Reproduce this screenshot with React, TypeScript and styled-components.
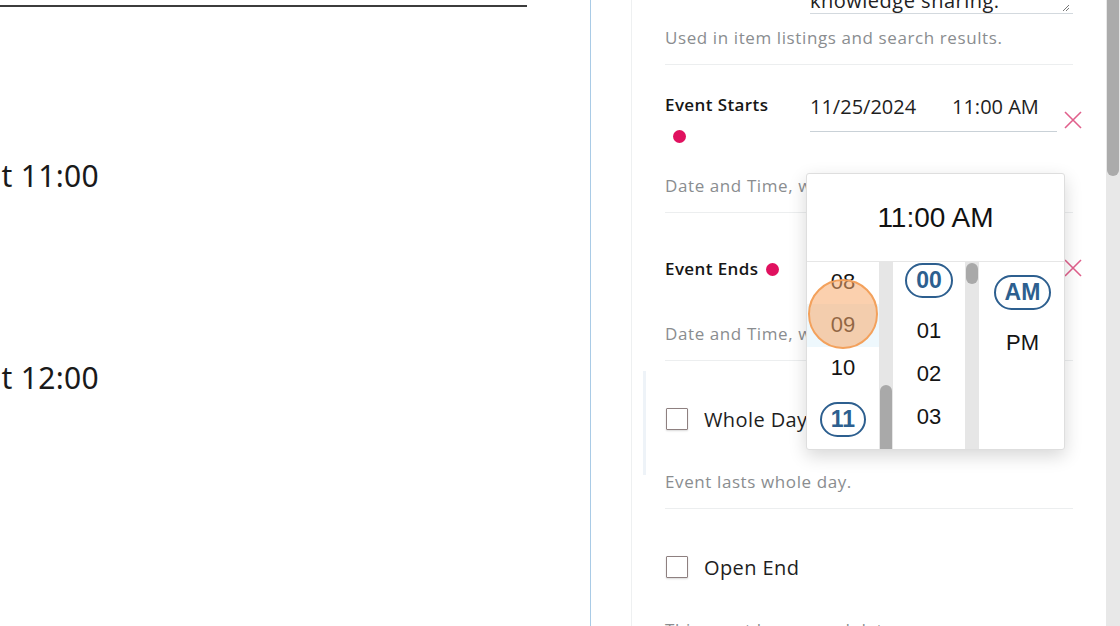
import { createGlobalStyle } from "styled-components";
import styled, { css } from "styled-components";

const GlobalStyle = createGlobalStyle`
  html, body {
    margin: 0;
    padding: 0;
    background: #fff;
  }
  body {
    font-family: "Open Sans", "Noto Sans", sans-serif;
    overflow: hidden;
  }
`;

const Page = styled.div`
  display: flex;
  width: 1120px;
  height: 626px;
  overflow: hidden;
  background: #fff;
`;

/* left editor pane */

const Editor = styled.div`
  width: 590px;
  flex-shrink: 0;
  border-right: 1px solid #a9cbe6;
  display: flex;
  flex-direction: column;
  overflow: hidden;
`;

const EditorRule = styled.div`
  width: 527px;
  height: 5px;
  border-bottom: 2px solid #3c3c3c;
`;

const EditorLine = styled.div<{ $gap: number }>`
  margin-top: ${(p) => p.$gap}px;
  width: 99px;
  display: flex;
  justify-content: flex-end;
  overflow: hidden;
  white-space: nowrap;
  font-family: "Noto Sans", "Open Sans", sans-serif;
  font-size: 30px;
  letter-spacing: 0.3px;
  line-height: 40px;
  color: #1a1a1a;
`;

/* right settings pane */

const Sidebar = styled.div`
  flex: 1;
  display: flex;
  padding-left: 40px;
  min-width: 0;
`;

const Panel = styled.div`
  flex: 1;
  border-left: 1px solid #eef0f1;
  padding: 0 33px;
  min-width: 0;
`;

const PageScroll = styled.div`
  width: 14px;
  flex-shrink: 0;
  background: #e8e8e8;
`;

const PageThumb = styled.div`
  height: 176px;
  margin: 0 1px;
  background: #ababab;
  border-radius: 0 0 7px 7px;
`;

const TextareaStub = styled.div`
  margin-left: 145px;
  height: 14px;
  box-sizing: border-box;
  border-bottom: 1px solid #d3d9de;
  display: flex;
  justify-content: space-between;
  overflow: hidden;
`;

const TextareaText = styled.div`
  margin-top: -11px;
  font-size: 20px;
  letter-spacing: 0.5px;
  line-height: 24px;
  color: #222;
`;

const ResizeHandle = styled.svg`
  width: 8px;
  height: 8px;
  margin: 4px 3px 0 0;
`;

const Section = styled.div<{ $top: number }>`
  position: relative;
  padding-top: ${(p) => p.$top}px;
  padding-bottom: 14px;
  border-bottom: 1px solid #eceeef;
`;

const MarkedSection = styled(Section)`
  &::before {
    content: "";
    position: absolute;
    left: -22px;
    top: 10px;
    width: 3px;
    height: 104px;
    background: #eef3f8;
  }
`;

const Helper = styled.div<{ $gap: number }>`
  margin-top: ${(p) => p.$gap}px;
  font-size: 17px;
  letter-spacing: 0.6px;
  line-height: 24px;
  color: #8a8d90;
  white-space: nowrap;
`;

const FieldRow = styled.div`
  display: flex;
  align-items: center;
  height: 62px;
`;

const FieldLabel = styled.div`
  width: 145px;
  flex-shrink: 0;
`;

const LabelText = styled.div`
  width: 122px;
  font-size: 17px;
  font-weight: 600;
  letter-spacing: 0.4px;
  line-height: 31px;
  color: #161616;
`;

const RequiredDot = styled.span`
  display: inline-block;
  width: 13px;
  height: 13px;
  margin-left: 8px;
  border-radius: 50%;
  background: #e0115f;
  vertical-align: -1px;
`;

const DateInput = styled.div`
  align-self: flex-start;
  flex-shrink: 0;
  width: 247px;
  height: 43px;
  box-sizing: border-box;
  border-bottom: 1px solid #c9d1d7;
  display: flex;
  font-size: 20px;
  line-height: 36px;
  color: #1e1e1e;
  white-space: nowrap;
`;

const DatePart = styled.span`
  width: 142px;
`;

const ClearButton = styled.button`
  all: unset;
  flex-shrink: 0;
  margin-left: 7px;
  width: 18px;
  height: 18px;
  display: flex;
  cursor: pointer;
`;

const CheckRow = styled.label`
  display: flex;
  align-items: center;
  height: 40px;
  font-size: 20px;
  letter-spacing: 0.4px;
  color: #1e1e1e;
`;

const CheckBox = styled.span`
  width: 22px;
  height: 22px;
  box-sizing: border-box;
  margin: 0 16px 0 1px;
  border: 1.5px solid #8e8080;
  border-radius: 1px;
  box-shadow: 0 1px 2px rgba(0, 0, 0, 0.15);
  background: #fff;
`;

/* time picker popup */

const Picker = styled.div`
  position: absolute;
  z-index: 10;
  top: 108px;
  left: 141px;
  width: 259px;
  height: 277px;
  box-sizing: border-box;
  background: #fff;
  border: 1px solid #dedede;
  border-radius: 3px;
  box-shadow: 0 6px 18px rgba(0, 0, 0, 0.16);
  display: flex;
  flex-direction: column;
  overflow: hidden;
  font-family: "Liberation Sans", Arial, sans-serif;
`;

const PickerHeader = styled.div`
  height: 87px;
  flex-shrink: 0;
  border-bottom: 1px solid #e6e6e6;
  display: flex;
  align-items: center;
  justify-content: center;
  font-size: 28px;
  color: #111;
`;

const PickerBody = styled.div`
  flex: 1;
  display: flex;
  min-height: 0;
`;

const Column = styled.div<{ $width: number; $offset: number }>`
  position: relative;
  width: ${(p) => p.$width}px;
  flex-shrink: 0;
  overflow: hidden;
  & > div:first-child {
    margin-top: ${(p) => -p.$offset}px;
  }
`;

const ItemList = styled.div`
  display: flex;
  flex-direction: column;
`;

const TimeItem = styled.div<{ $selected?: boolean; $hover?: boolean }>`
  height: ${(p) => (p.$selected ? 59 : 43)}px;
  display: flex;
  align-items: center;
  justify-content: center;
  font-size: 22px;
  color: #141414;
  ${(p) =>
    p.$hover &&
    css`
      background: #eef8fd;
    `}
`;

const Pill = styled.span`
  height: 35px;
  box-sizing: border-box;
  padding: 0 9px;
  display: flex;
  align-items: center;
  border: 2.5px solid #2d5f8f;
  border-radius: 18px;
  font-size: 23px;
  font-weight: 700;
  color: #2d5f8f;
`;

const ColumnTrack = styled.div`
  width: 14px;
  flex-shrink: 0;
  background: #e6e6e6;
`;

const ColumnThumb = styled.div<{ $top: number; $size: number }>`
  margin: ${(p) => p.$top}px 1px 0;
  height: ${(p) => p.$size}px;
  border-radius: 6px;
  background: #a9a9a9;
`;

const TouchMark = styled.div`
  position: absolute;
  left: 1px;
  top: 17px;
  width: 70px;
  height: 70px;
  box-sizing: border-box;
  border-radius: 50%;
  border: 2px solid #f3a15c;
  background: rgba(248, 170, 108, 0.55);
`;

const ClearIcon = () => (
  <svg width="18" height="18" viewBox="0 0 18 18">
    <path d="M1 1 L17 17 M17 1 L1 17" stroke="#e0608c" strokeWidth="1.6" fill="none" />
  </svg>
);

type Entry = { label: string; selected?: boolean; hover?: boolean };

const hours: Entry[] = [
  { label: "08" },
  { label: "09", hover: true },
  { label: "10" },
  { label: "11", selected: true },
  { label: "12" },
];

const minutes: Entry[] = [
  { label: "00", selected: true },
  { label: "01" },
  { label: "02" },
  { label: "03" },
  { label: "04" },
];

const meridiem: Entry[] = [{ label: "AM", selected: true }, { label: "PM" }];

const renderItems = (entries: Entry[]) =>
  entries.map((e) => (
    <TimeItem key={e.label} $selected={e.selected} $hover={e.hover}>
      {e.selected ? <Pill>{e.label}</Pill> : e.label}
    </TimeItem>
  ));

const TimePicker = () => (
  <Picker>
    <PickerHeader>11:00 AM</PickerHeader>
    <PickerBody>
      <Column $width={72} $offset={1.5}>
        <ItemList>{renderItems(hours)}</ItemList>
        <TouchMark />
      </Column>
      <ColumnTrack>
        <ColumnThumb $top={123} $size={70} />
      </ColumnTrack>
      <Column $width={72} $offset={11.5}>
        <ItemList>{renderItems(minutes)}</ItemList>
      </Column>
      <ColumnTrack>
        <ColumnThumb $top={1} $size={21} />
      </ColumnTrack>
      <Column $width={87} $offset={-0.5}>
        <ItemList>{renderItems(meridiem)}</ItemList>
      </Column>
    </PickerBody>
  </Picker>
);

const App = () => {
  return (
    <>
      <GlobalStyle />
      <Page>
        <Editor>
          <EditorRule />
          <EditorLine $gap={149}>Event starts at 11:00</EditorLine>
          <EditorLine $gap={162}>Event ends at 12:00</EditorLine>
        </Editor>
        <Sidebar>
          <Panel>
            <TextareaStub>
              <TextareaText>knowledge sharing.</TextareaText>
              <ResizeHandle viewBox="0 0 8 8">
                <path d="M7 1 L1 7 M7 4 L4 7" stroke="#777" strokeWidth="1" fill="none" />
              </ResizeHandle>
            </TextareaStub>
            <Section $top={0}>
              <Helper $gap={12}>Used in item listings and search results.</Helper>
            </Section>

            <Section $top={24}>
              <FieldRow>
                <FieldLabel>
                  <LabelText>
                    Event Starts
                    <RequiredDot />
                  </LabelText>
                </FieldLabel>
                <DateInput>
                  <DatePart>11/25/2024</DatePart>
                  <span>11:00 AM</span>
                </DateInput>
                <ClearButton type="button">
                  <ClearIcon />
                </ClearButton>
              </FieldRow>
              <Helper $gap={23}>Date and Time, when the event starts.</Helper>
              <TimePicker />
            </Section>

            <Section $top={24}>
              <FieldRow>
                <FieldLabel>
                  <LabelText>
                    Event Ends
                    <RequiredDot />
                  </LabelText>
                </FieldLabel>
                <DateInput>
                  <DatePart>11/25/2024</DatePart>
                  <span>12:00 PM</span>
                </DateInput>
                <ClearButton type="button">
                  <ClearIcon />
                </ClearButton>
              </FieldRow>
              <Helper $gap={23}>Date and Time, when the event ends.</Helper>
            </Section>

            <MarkedSection $top={38}>
              <CheckRow>
                <CheckBox />
                Whole Day
              </CheckRow>
              <Helper $gap={31}>Event lasts whole day.</Helper>
            </MarkedSection>

            <Section $top={38}>
              <CheckRow>
                <CheckBox />
                Open End
              </CheckRow>
              <Helper $gap={31}>This event has no end date.</Helper>
            </Section>
          </Panel>
          <PageScroll>
            <PageThumb />
          </PageScroll>
        </Sidebar>
      </Page>
    </>
  );
};

export default App;
